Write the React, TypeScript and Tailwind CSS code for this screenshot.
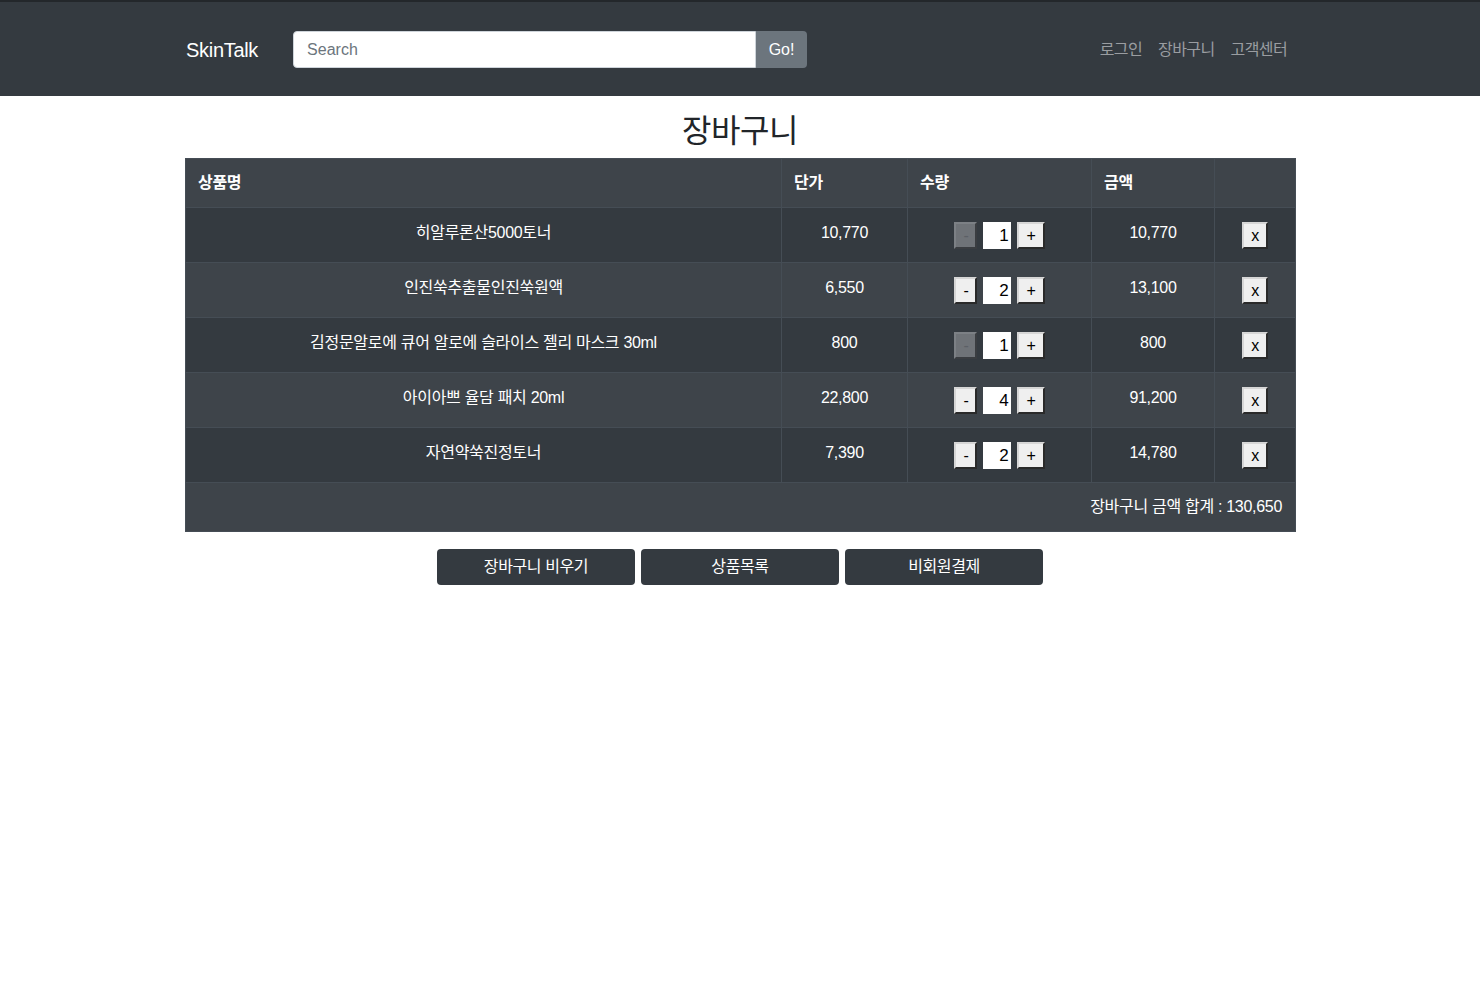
import React from 'react';

const items = [
  { name: '히알루론산5000토너', price: 10770, qty: 1 },
  { name: '인진쑥추출물인진쑥원액', price: 6550, qty: 2 },
  { name: '김정문알로에 큐어 알로에 슬라이스 젤리 마스크 30ml', price: 800, qty: 1 },
  { name: '아이아쁘 율담 패치 20ml', price: 22800, qty: 4 },
  { name: '자연약쑥진정토너', price: 7390, qty: 2 },
];

const fmt = (n: number) => n.toLocaleString('en-US');

const btn =
  'h-[27px] px-[7px] text-[16px] leading-none text-black bg-[#efefef] border-2 border-[#d6d6d6] border-r-[#2a2a2a] border-b-[#2a2a2a]';
const btnOff =
  'h-[27px] px-[7px] text-[16px] leading-none text-[#5c6066] bg-[#6f7378] border-2 border-[#7c8085] border-r-[#3a3d41] border-b-[#3a3d41]';

const App: React.FC = () => {
  const total = items.reduce((s, i) => s + i.price * i.qty, 0);
  const rowBg = (i: number) => (i % 2 === 0 ? 'bg-[#3e444a]' : 'bg-[#343a40]');

  return (
    <div className="min-h-[992px] bg-white font-['Liberation_Sans','Noto_Sans_CJK_KR',sans-serif] text-[#212529]">
      <nav className="h-[96px] bg-[#343a40] border-t-2 border-[#23272b]">
        <div className="w-[1110px] mx-auto h-full flex items-center pt-[1px]">
          <span className="ml-[1px] text-white text-[20px] tracking-[-0.3px]">SkinTalk</span>
          <div className="ml-[35px] flex">
            <input
              placeholder="Search"
              className="w-[463px] h-[37px] bg-white rounded-l-[4px] pl-[13px] text-[16px] text-[#495057] placeholder:text-[#6c757d] outline-none border border-[#ced4da]"
            />
            <button className="w-[51px] h-[37px] bg-[#6c757d] text-white text-[16px] rounded-r-[4px]">Go!</button>
          </div>
          <div className="ml-auto flex gap-[16px] mr-[8px] tracking-[-0.6px]">
            {['로그인', '장바구니', '고객센터'].map((t) => (
              <a key={t} className="text-[16px] text-[#9a9da1]">
                {t}
              </a>
            ))}
          </div>
        </div>
      </nav>

      <h2 className="mt-[16px] mb-[8px] text-center text-[32px] leading-[1.2] tracking-[-0.5px]">장바구니</h2>

      <div className="w-[1110px] mx-auto">
        <table className="w-[1110px] table-fixed border-collapse text-white text-[16px] leading-6 tracking-[-0.3px]">
          <colgroup>
            <col className="w-[596px]" />
            <col className="w-[126px]" />
            <col className="w-[184px]" />
            <col className="w-[123px]" />
            <col className="w-[81px]" />
          </colgroup>
          <tbody>
            <tr className={rowBg(0)}>
              {['상품명', '단가', '수량', '금액', ''].map((h, i) => (
                <th key={i} className="h-[49px] px-[12px] py-3 text-left font-bold border border-[#454d55] align-middle">
                  {h}
                </th>
              ))}
            </tr>
            {items.map((it, idx) => (
              <tr key={it.name} className={rowBg(idx + 1)}>
                <td className="h-[55px] pt-[13px] px-3 text-center align-top border border-[#454d55]">{it.name}</td>
                <td className="pt-[13px] px-3 text-center align-top border border-[#454d55]">{fmt(it.price)}</td>
                <td className="px-3 align-top border border-[#454d55]">
                  <div className="mt-[14px] flex justify-center items-center gap-[6px]">
                    <button className={it.qty === 1 ? btnOff : btn}>-</button>
                    <div className="w-[28px] h-[27px] bg-white text-black text-right pr-[3px] text-[17px] leading-[27px]">{it.qty}</div>
                    <button className={btn}>+</button>
                  </div>
                </td>
                <td className="pt-[13px] px-3 text-center align-top border border-[#454d55]">{fmt(it.price * it.qty)}</td>
                <td className="px-3 align-top border border-[#454d55]">
                  <div className="mt-[14px] flex justify-center">
                    <button className={btn}>x</button>
                  </div>
                </td>
              </tr>
            ))}
            <tr className={rowBg(6)}>
              <td colSpan={5} className="h-[49px] px-[13px] text-right border border-[#454d55]">
                장바구니 금액 합계 : {fmt(total)}
              </td>
            </tr>
          </tbody>
        </table>

        <div className="mt-[17px] flex justify-center gap-[6px]">
          {['장바구니 비우기', '상품목록', '비회원결제'].map((t) => (
            <button key={t} className="w-[198px] h-[36px] bg-[#343a40] text-white text-[16px] rounded-[4px] tracking-[-0.4px]">
              {t}
            </button>
          ))}
        </div>
      </div>
    </div>
  );
};

export default App;
